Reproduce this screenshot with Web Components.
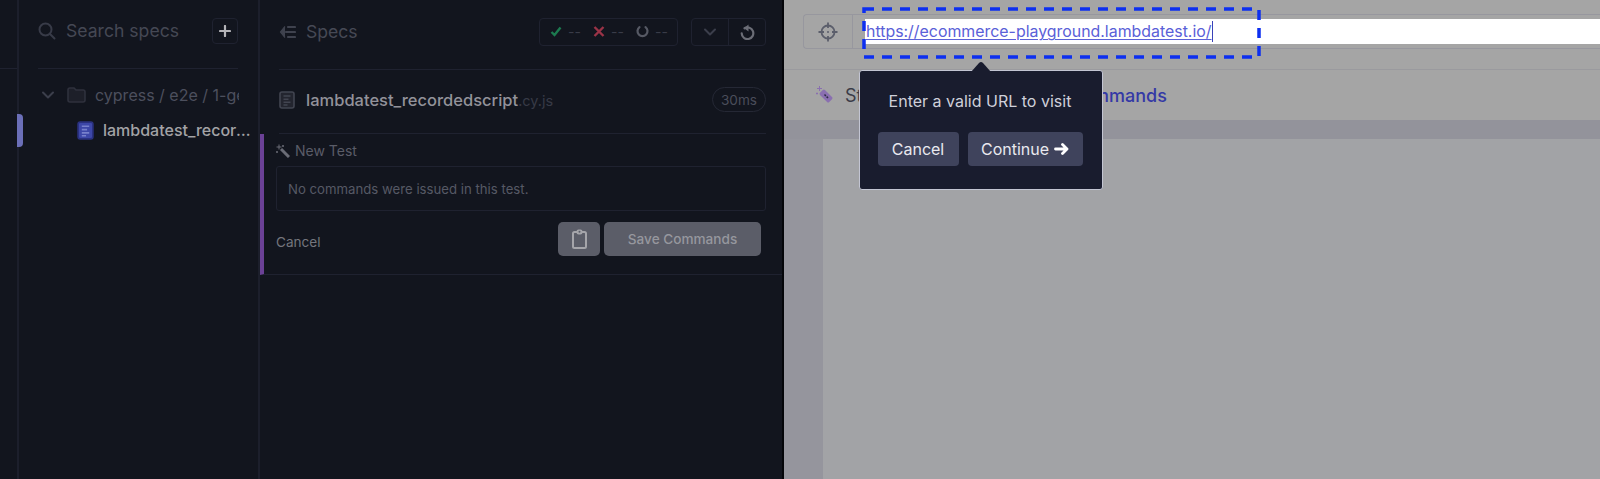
<!DOCTYPE html>
<html><head><meta charset="utf-8"><title>Specs</title>
<style>
html,body{margin:0;height:479px;overflow:hidden;background:#12151e}
body{font-family:Inter,"Noto Sans",sans-serif}
app-shell{height:479px}
</style></head><body>
<app-shell>
  <nav-rail slot="rail"></nav-rail>
  <spec-sidebar slot="sidebar"></spec-sidebar>
  <reporter-panel slot="reporter"></reporter-panel>
  <studio-preview slot="preview"></studio-preview>
</app-shell>
<script>
function el(name,html){
  customElements.define(name,class extends HTMLElement{
    constructor(){super();this.attachShadow({mode:'open'}).innerHTML=html;}
  });
}
const docIcon=(fill,line,w,h,edge)=>`<svg width="${w}" height="${h}" viewBox="0 0 16 18"><rect x="1" y="1" width="14" height="16" rx="2" fill="${fill}" stroke="${edge||line}" stroke-width="1.6"/><path d="M4.5 5h7M4.5 8.2h5M4.5 11.2h7M4.5 14h4" stroke="${line}" stroke-width="1.6" fill="none"/></svg>`;

el('app-shell',`<style>
:host{display:grid;grid-template-columns:19px 241px 524px 1fr;width:1600px}
</style><slot name="rail"></slot><slot name="sidebar"></slot><slot name="reporter"></slot><slot name="preview"></slot>`);

el('nav-rail',`<style>
:host{display:block;height:479px;box-sizing:border-box;border-right:2px solid #1c1f2c;position:relative}
.top{height:69px;border-bottom:1px solid #1f2230;box-sizing:border-box}
.tab{position:absolute;left:17px;top:114px;width:6px;height:33px;border-radius:0 4px 4px 0;background:#6b6fb8}
</style><div class="top"></div><div class="tab"></div>`);

el('spec-sidebar',`<style>
:host{display:block;height:479px;box-sizing:border-box;border-right:2px solid #1c1f2c;color:#4a4d5c;padding:0 20px 0 19px}
.search{display:flex;align-items:center;height:69px;box-sizing:border-box;padding-bottom:7px;border-bottom:1px solid #1f2230;font-size:17.6px;color:#454854}
.search svg{margin-right:10px;flex:none}
.search span{flex:1}
.plus{width:26px;height:26px;box-sizing:border-box;border:1px solid #1f2230;border-radius:4px;display:flex;align-items:center;justify-content:center}
.plus svg{margin:0}
.folder{display:flex;align-items:center;height:52px;font-size:16px;color:#4c4f5d;white-space:nowrap;overflow:hidden;margin-right:-1px}
.folder .ch{margin:0 13px 0 4px;flex:none}
.folder .f{margin-right:9px;flex:none}
.file{display:flex;align-items:center;margin:-1px -17px 0 39px;height:20px;font-size:16px;font-weight:500;color:#a3a3a6;white-space:nowrap}
.file svg{flex:none;margin-right:9px}
.file span{overflow:hidden;text-overflow:ellipsis}
</style>
<div class="search"><svg width="18" height="18" viewBox="0 0 18 18" fill="none" stroke="#383b48" stroke-width="2"><circle cx="7.5" cy="7.5" r="6"/><path d="M12 12l4.5 4.5" stroke-linecap="round"/></svg><span>Search specs</span>
<div class="plus"><svg width="12" height="12" viewBox="0 0 12 12"><path d="M6 1v10M1 6h10" stroke="#b4b4b8" stroke-width="2.2" stroke-linecap="round"/></svg></div></div>
<div class="folder"><svg class="ch" width="12" height="8" viewBox="0 0 12 8" fill="none"><path d="M1 1.500l5 5 5-5" stroke="#3b3e4b" stroke-width="2" stroke-linecap="round" stroke-linejoin="round"/></svg>
<svg class="f" width="19" height="16" viewBox="0 0 19 16"><path d="M1 3a2 2 0 0 1 2-2h4l2 2h7a2 2 0 0 1 2 2v8a2 2 0 0 1-2 2H3a2 2 0 0 1-2-2z" fill="#1d1f29" stroke="#2f313d" stroke-width="1.6"/></svg><span>cypress / e2e / 1-ge</span></div>
<div class="file">${docIcon('#3d47a8','#7780cc',17,19,'#2a3180')}<span>lambdatest_recordedscript.cy.js</span></div>`);

el('stat-group',`<style>
:host{display:flex;align-items:center;height:28px;box-sizing:border-box;border:1px solid #1f2230;border-radius:4px;color:#393c48;font-size:14px;padding:0 10px}
i{font-style:normal;flex:none;width:12px;margin:0 13px 0 6px;white-space:nowrap}
i:last-of-type{margin-right:0}
svg{flex:none}
</style>
<svg width="12" height="11" viewBox="0 0 12 11" fill="none"><path d="M1.500 6l3 3 6-7.500" stroke="#1c7a4f" stroke-width="2.400"/></svg><i>--</i>
<svg width="12" height="11" viewBox="0 0 12 11" fill="none"><path d="M1.500 1l9 9M10.500 1l-9 9" stroke="#9a3347" stroke-width="2.400"/></svg><i>--</i>
<svg width="13" height="13" viewBox="0 0 13 13" fill="none"><path d="M3.500 2.200a5 5 0 1 0 6 0" stroke="#565964" stroke-width="2.200" stroke-linecap="round"/></svg><i>--</i>`);

el('run-controls',`<style>
:host{display:flex;height:28px;box-sizing:border-box;border:1px solid #1f2230;border-radius:4px}
div{display:flex;align-items:center;justify-content:center}
.a{width:36px;border-right:1px solid #1f2230}
.b{width:36px}
</style>
<div class="a"><svg width="12" height="8" viewBox="0 0 12 8" fill="none"><path d="M1 1.500l5 5 5-5" stroke="#3b3e4b" stroke-width="2" stroke-linecap="round" stroke-linejoin="round"/></svg></div>
<div class="b"><svg width="15" height="16" viewBox="0 0 15 16" fill="none"><path d="M4.500 4.300a5.800 5.800 0 1 1-2.800 5" stroke="#6b6d76" stroke-width="2.200" stroke-linecap="round"/><path d="M8.500 0.500L4 4.200l4.500 3.300z" fill="#6b6d76"/></svg></div>`);

el('reporter-panel',`<style>
:host{display:block;height:479px;box-sizing:border-box;border-right:2px solid #05060a;color:#4a4d5a}
.head{display:flex;align-items:center;height:70px;padding-bottom:6px;margin:0 16px 0 19px;border-bottom:1px solid #1f2230;box-sizing:border-box;font-size:17.6px;color:#464955}
.head svg.back{margin-right:10px}
.head span{flex:1}
run-controls{margin-left:13px}
.spec{display:flex;align-items:center;height:64px;padding-bottom:4px;margin:0 16px 0 19px;border-bottom:1px solid #1f2230;box-sizing:border-box;font-size:16.5px;font-weight:500;color:#92929a}
.spec svg{margin-right:11px}
.spec span{flex:1}
.spec em{font-style:normal;font-weight:400;font-size:14.5px;color:#373a46}
.pill{height:25px;box-sizing:border-box;padding:0 8px;border:1px solid #252835;border-radius:13px;font-size:13.6px;font-weight:400;display:flex;align-items:center;color:#4a4d5a}
.test{height:141px;box-sizing:border-box;border-left:4px solid #6b4196;border-bottom:1px solid #1f2230;padding:7px 16px 0 12px}
.title{display:flex;align-items:center;font-size:14px;color:#5a5c68;height:19px}
.title svg{margin:0 5px 0 0}
.box{height:45px;box-sizing:border-box;margin:6px 0 11px 0;border:1px solid #1f2230;border-radius:3px;display:flex;align-items:center;padding:0 11px;font-size:13.2px;color:#565965}
.acts{display:flex;align-items:center;margin-right:5px}
.acts .c{flex:1;font-size:13.6px;color:#74757d;padding-top:5px}
.clip{width:42px;height:34px;border-radius:5px;background:#5b5d68;display:flex;align-items:center;justify-content:center;margin-right:4px}
.save{width:157px;height:34px;border-radius:5px;background:#5b5d68;color:#96979e;font-size:13.6px;font-weight:500;display:flex;align-items:center;justify-content:center}
</style>
<div class="head"><svg class="back" width="17" height="14" viewBox="0 0 17 14" fill="none"><path d="M6 1.500L1.500 7 6 12.500" fill="#3f424e" stroke="#3f424e" stroke-width="1.200"/><path d="M9 2h7M7 7h9M9 12h7" stroke="#3f424e" stroke-width="2.200" stroke-linecap="round"/></svg><span>Specs</span><stat-group></stat-group><run-controls></run-controls></div>
<div class="spec">${docIcon('#23252f','#424551',16,18)}<span>lambdatest_recordedscript<em>.cy.js</em></span><div class="pill">30ms</div></div>
<div class="test">
 <div class="title"><svg width="14" height="14" viewBox="0 0 14 14" fill="none"><path d="M5 5l8 8" stroke="#6a6c76" stroke-width="3"/><path d="M3 0.500v5M0.500 3h5M7 1v2M6 2h2M1 7v2M0 8h2" stroke="#6a6c76" stroke-width="1"/></svg>New Test</div>
 <div class="box">No commands were issued in this test.</div>
 <div class="acts"><div class="c">Cancel</div><div class="clip"><svg width="15" height="20" viewBox="0 0 15 20" fill="none"><rect x="1" y="3" width="13" height="16" rx="1.500" stroke="#a5a5aa" stroke-width="2"/><rect x="4.500" y="0.500" width="6" height="5" rx="2" fill="#a5a5aa"/><circle cx="7.500" cy="2.800" r="1" fill="#5b5d68"/></svg></div><div class="save">Save Commands</div></div>
</div>`);

el('url-bar',`<style>
:host{display:flex;height:70px;box-sizing:border-box;border-bottom:1px solid #9a9a9e;padding:14px 0 20px 19px}
.sel{width:49px;box-sizing:border-box;border:1px solid #97979e;border-right:none;border-radius:4px 0 0 4px;display:flex;align-items:center;justify-content:center}
.wrap{flex:1;box-sizing:border-box;border:1px solid #97979e;border-right:none;padding:4px 0;}
.input{height:25px;margin-left:12px;background:#fff;padding-left:1px;display:flex;align-items:center;font-size:15.9px;color:#5a60d8;box-sizing:border-box}
u{text-underline-offset:2px;text-decoration-thickness:1px;border-right:1px solid #3a42b8;line-height:21px}
</style>
<div class="sel"><svg width="20" height="20" viewBox="0 0 20 20" fill="none" stroke="#5b5e6b" stroke-width="1.800"><circle cx="10" cy="10" r="6.500"/><path d="M10 0.500v5.500M10 14v5.500M0.500 10h5.500M14 10h5.500"/><circle cx="10" cy="10" r="1" fill="#5b5e6b" stroke="none"/></svg></div>
<div class="wrap"><div class="input"><u>https://ecommerce-playground.lambdatest.io/</u></div></div>`);

el('url-popover',`<style>
:host{position:absolute;left:75px;top:70px;width:244px;height:120px;box-sizing:border-box;background:#191c2e;border:1px solid #c3c5d3;border-radius:3px;color:#cfd0da;display:flex;flex-direction:column;align-items:center;padding:20px 2px 0 0;font-size:16px}
.arrow{position:absolute;left:111px;top:-10px;width:20px;height:10px}
.row{display:flex;gap:9px;margin-top:21px}
.btn{height:34px;border-radius:4px;background:#3f435c;color:#e9e9ef;font-size:16px;display:flex;align-items:center;justify-content:center;gap:5px}
.x{width:81px}.y{width:115px}
</style>
<svg class="arrow" viewBox="0 0 20 10"><path d="M0 11L8 2q2-2 4 0l8 9z" fill="#191c2e"/></svg>
<div>Enter a valid URL to visit</div>
<div class="row"><div class="btn x">Cancel</div><div class="btn y">Continue<svg width="15" height="12" viewBox="0 0 15 12" fill="none"><path d="M1.500 6h11M8.500 1.500L13 6l-4.500 4.500" stroke="#fff" stroke-width="2.800" stroke-linecap="round" stroke-linejoin="round"/></svg></div></div>`);

el('studio-preview',`<style>
:host{display:block;height:479px;position:relative;background:#a5a5a5;overflow:hidden;color:#3a3c48}
.tabs{height:50px;display:flex;align-items:center;padding-left:32px;font-size:18px;gap:11px;box-sizing:border-box}
.tabs a{color:#3438a6;font-size:18px;font-weight:500;position:absolute;left:285px;top:85px}
.strip{height:19px;background:#93939b}
.body{display:flex;height:340px;background:#95959d}
.page{margin-left:39px;flex:1;background:#a2a3a6}
.dash{position:absolute;left:78px;top:7px;width:399px;height:52px}
</style>
<url-bar></url-bar>
<div class="tabs"><svg width="18" height="18" viewBox="0 0 18 18" fill="none"><rect x="3.500" y="6.500" width="13" height="7" rx="1.500" transform="rotate(45 10 10)" fill="#8a6fb0"/><path d="M8.500 8.500l3.500 3.500" stroke="#2c2c44" stroke-width="1.500" stroke-dasharray="2 1"/><path d="M3.500 0v5M1 2.500h5M1 6.500v2M0 7.500h2" stroke="#8a6fb0" stroke-width="1"/></svg><span>Studio</span><a>Commands</a></div>
<div class="strip"></div>
<div class="body"><div class="page"></div></div>
<svg class="dash" viewBox="0 0 399 52" fill="none"><rect x="2" y="2" width="395" height="48" stroke="#0d2ff0" stroke-width="3.500" stroke-dasharray="10 8"/></svg>
<url-popover></url-popover>`);
</script>
</body></html>
